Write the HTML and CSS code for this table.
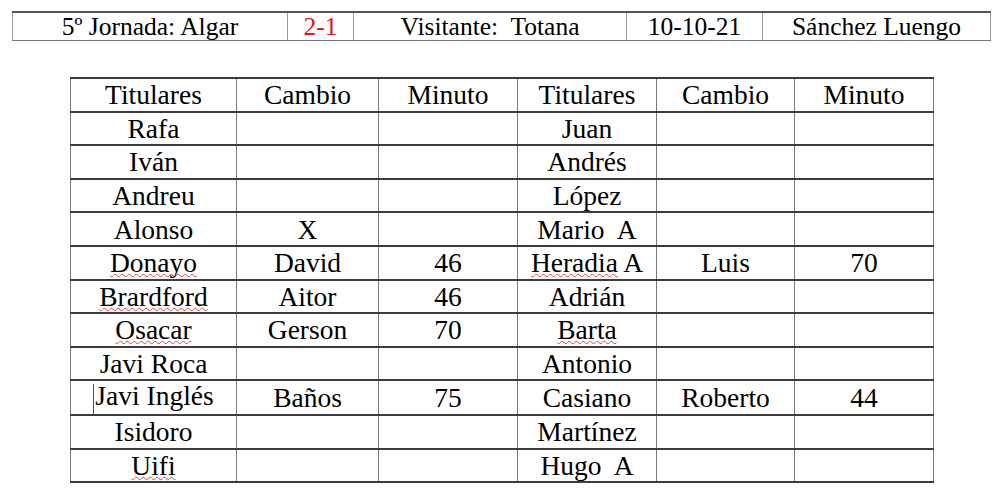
FILE: index.html
```html
<!DOCTYPE html>
<html lang="es">
<head>
<meta charset="utf-8">
<title>5º Jornada</title>
<link rel="stylesheet" href="styles.css">
</head>
<body>
<table class="info">
  <tr>
    <td class="c1">5º Jornada: Algar</td>
    <td class="c2 score">2-1</td>
    <td class="c3">Visitante:&nbsp; Totana</td>
    <td class="c4">10-10-21</td>
    <td class="c5">Sánchez Luengo</td>
  </tr>
</table>

<table class="lineup">
  <colgroup>
    <col class="w1"><col class="w2"><col class="w3"><col class="w4"><col class="w5"><col class="w6">
  </colgroup>
  <tr><td>Titulares</td><td>Cambio</td><td>Minuto</td><td>Titulares</td><td>Cambio</td><td>Minuto</td></tr>
  <tr><td>Rafa</td><td></td><td></td><td>Juan</td><td></td><td></td></tr>
  <tr><td>Iván</td><td></td><td></td><td>Andrés</td><td></td><td></td></tr>
  <tr><td>Andreu</td><td></td><td></td><td>López</td><td></td><td></td></tr>
  <tr><td>Alonso</td><td>X</td><td></td><td>Mario&nbsp; A</td><td></td><td></td></tr>
  <tr><td><span class="sp">Donayo</span></td><td>David</td><td>46</td><td><span class="sp">Heradia</span> A</td><td>Luis</td><td>70</td></tr>
  <tr><td><span class="sp">Brardford</span></td><td>Aitor</td><td>46</td><td>Adrián</td><td></td><td></td></tr>
  <tr><td><span class="sp">Osacar</span></td><td>Gerson</td><td>70</td><td><span class="sp">Barta</span></td><td></td><td></td></tr>
  <tr><td>Javi Roca</td><td></td><td></td><td>Antonio</td><td></td><td></td></tr>
  <tr><td><span class="caret"></span>Javi Inglés</td><td>Baños</td><td>75</td><td>Casiano</td><td>Roberto</td><td>44</td></tr>
  <tr><td>Isidoro</td><td></td><td></td><td>Martínez</td><td></td><td></td></tr>
  <tr><td><span class="sp">Uifi</span></td><td></td><td></td><td>Hugo&nbsp; A</td><td></td><td></td></tr>
</table>
</body>
</html>
```

FILE: styles.css
```css
html, body {
  margin: 0;
  padding: 0;
  background: #fff;
}

body {
  font-family: "Liberation Serif", "Times New Roman", serif;
  color: #000;
}

table {
  border-collapse: collapse;
  table-layout: fixed;
}

td {
  padding: 0;
  text-align: center;
  vertical-align: middle;
  white-space: nowrap;
}

/* Header info strip */
.info {
  margin: 11px 0 0 12px;
  width: 978px;
  font-size: 25.5px;
}

.info td {
  height: 27px;
  line-height: 27px;
  border-top: 2px solid #555;
  border-bottom: 1px solid #777;
  border-left: 1px solid #999;
  border-right: 1px solid #999;
}

.info .c1 { width: 274px; }
.info .c2 { width: 65px; }
.info .c3 { width: 272px; }
.info .c4 { width: 135px; }
.info .c5 { width: 227px; }

.score { color: #f01010; }

/* Line-up table */
.lineup {
  margin: 36px 0 0 70px;
  width: 863px;
  font-size: 27.5px;
}

.lineup .w1 { width: 166px; }
.lineup .w2 { width: 142px; }
.lineup .w3 { width: 139px; }
.lineup .w4 { width: 139px; }
.lineup .w5 { width: 138px; }
.lineup .w6 { width: 139px; }

.lineup tr { height: 33.6px; }

.lineup td {
  border-top: 2px solid #3c3c3c;
  border-bottom: 2px solid #3c3c3c;
  border-left: 1px solid #7a7a7a;
  border-right: 1px solid #7a7a7a;
  line-height: 29px;
}

.sp {
  text-decoration: underline wavy #e04040;
  text-decoration-thickness: 1px;
  text-underline-offset: 1px;
  text-decoration-skip-ink: none;
}

.caret {
  display: inline-block;
  width: 0;
  height: 30px;
  border-left: 1px solid #555;
  vertical-align: middle;
  margin-right: 1px;
}
```
